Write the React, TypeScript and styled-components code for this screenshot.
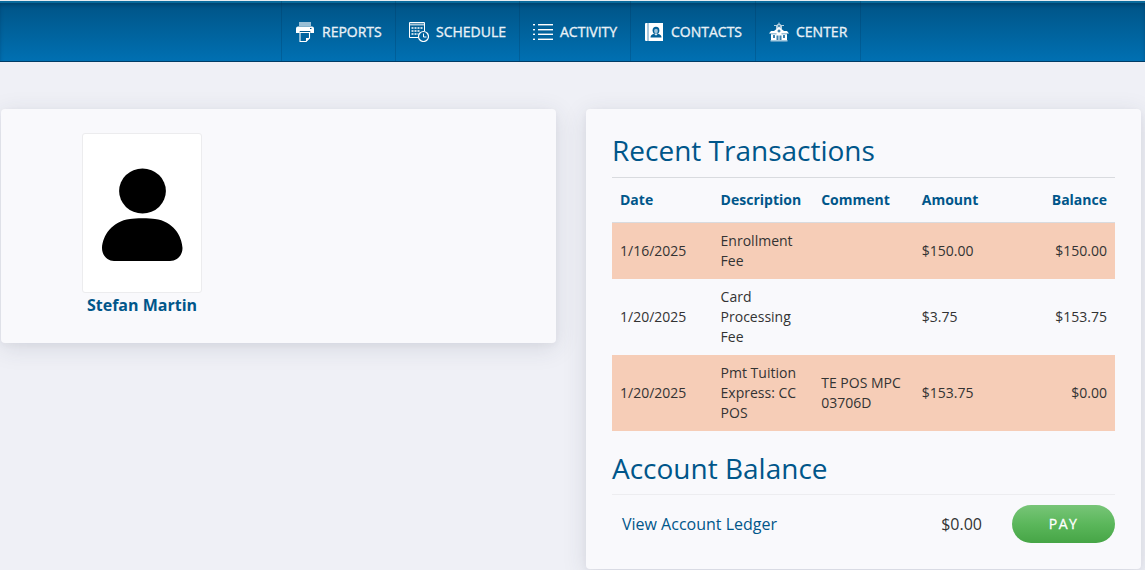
import React from "react";
import styled, { createGlobalStyle } from "styled-components";

const GlobalStyle = createGlobalStyle`
  *, *::before, *::after { box-sizing: border-box; }
  html, body { margin: 0; height: 570px; overflow: hidden; }
  body {
    background: #eff0f6;
    color: #333;
    font-family: "Open Sans", "Noto Sans", sans-serif;
    font-size: 16px;
  }
`;

const Header = styled.header`
  height: 62px;
  display: flex;
  padding-left: 281px;
  border-top: 1px solid #e8ebf0;
  border-bottom: 1px solid #003c66;
  background: linear-gradient(#005385, #0070b2);
  box-shadow: inset 0 2px 0 #0a6a9c, inset 0 5px 4px -1px rgba(0, 50, 85, 0.55);
`;

const NavItem = styled.a<{ $width: number; $last?: boolean }>`
  width: ${(p) => p.$width}px;
  height: 60px;
  display: flex;
  align-items: center;
  gap: 7px;
  padding: 2px 0 0 13px;
  border-left: 1px solid rgba(0, 45, 80, 0.22);
  ${(p) => p.$last && "border-right: 1px solid rgba(0, 45, 80, 0.22);"}
  color: #e9f1f7;
  font-size: 14px;
  font-weight: 500;
  -webkit-text-stroke: 0.35px #e9f1f7;
  line-height: 20px;
  white-space: nowrap;
  text-decoration: none;
`;

const NavIcon = styled.svg`
  width: 20px;
  height: 20px;
  flex: none;
  color: #fff;
`;

const Main = styled.main`
  display: flex;
  align-items: flex-start;
  gap: 30px;
  padding: 47px 4px 0 1px;
`;

const Card = styled.section<{ $height: number }>`
  width: 555px;
  height: ${(p) => p.$height}px;
  border-radius: 4px;
  background: #f9f9fc;
  box-shadow: 0 5px 25px rgba(50, 55, 80, 0.13), 0 2px 6px rgba(50, 55, 80, 0.04);
`;

const ProfileCard = styled(Card)`
  padding: 24px 0 0 81px;
`;

const Profile = styled.div`
  width: 120px;
  display: flex;
  flex-direction: column;
  align-items: center;
`;

const Avatar = styled.svg`
  width: 120px;
  height: 160px;
  border: 1px solid #ececee;
  border-radius: 3px;
  background: #fff;
`;

const Name = styled.a`
  color: #00568a;
  font-weight: 700;
  line-height: 24px;
  white-space: nowrap;
`;

const LedgerCard = styled(Card)`
  padding: 24px 26px 0;
`;

const Heading = styled.h2`
  margin: 0;
  color: #00568a;
  font-size: 28px;
  font-weight: 400;
  line-height: 34px;
`;

const Table = styled.table`
  width: 503px;
  margin-top: 10px;
  table-layout: fixed;
  border-collapse: separate;
  border-spacing: 0;
  font-size: 14px;
  line-height: 20px;
`;

const HeadCell = styled.th<{ $right?: boolean }>`
  height: 46px;
  padding: 0 8px;
  border-top: 1px solid #d9dbdf;
  border-bottom: 1px solid #d9dbdf;
  color: #00568a;
  font-weight: 700;
  text-align: ${(p) => (p.$right ? "right" : "left")};
`;

const Row = styled.tr<{ $shaded?: boolean }>`
  background: ${(p) => (p.$shaded ? "#f6cdb7" : "transparent")};
`;

const Cell = styled.td<{ $right?: boolean }>`
  padding: 8px;
  vertical-align: middle;
  text-align: ${(p) => (p.$right ? "right" : "left")};
`;

const BalanceHeading = styled(Heading)`
  margin-top: 20px;
  height: 44px;
  border-bottom: 1px solid #ededf0;
`;

const BalanceRow = styled.div`
  display: flex;
  align-items: center;
  height: 38px;
  margin-top: 10px;
  padding-left: 10px;
`;

const LedgerLink = styled.a`
  flex: 1;
  color: #00568a;
`;

const Total = styled.span`
  margin-right: 30px;
`;

const PayButton = styled.button`
  width: 103px;
  height: 38px;
  padding: 0;
  border: 0;
  border-radius: 19px;
  background: linear-gradient(#78c578, #5bb75b 50%, #46a546);
  color: #fff;
  font: 500 14px/20px "Open Sans", sans-serif;
  letter-spacing: 1.4px;
  -webkit-text-stroke: 0.3px #fff;
`;

const PrinterIcon = () => (
  <NavIcon viewBox="0 0 20 20" fill="currentColor">
    <path opacity=".6" d="M4 0h12v4H4z" />
    <path d="M3 4.500h14q2 0 2 2V11h-4V9H5v2H1V6.500q0-2 2-2z" />
    <path d="M4 9.500h12v1H4z" fill="#003f68" opacity=".5" />
    <path d="M5 10.500h9.500V16L11 19.500H5z" fill="#0064a0" stroke="currentColor" strokeWidth="1.100" />
    <path d="M11 16h3.500L11 19.500z" />
    <path d="M15 6h1.500v1H15z" fill="#00568a" />
  </NavIcon>
);

const ScheduleIcon = () => (
  <NavIcon viewBox="0 0 20 20" fill="none" stroke="currentColor">
    <path d="M9 15.500H.5V.5h15V9" />
    <path d="M1 2.500h14" strokeWidth="2" opacity=".65" />
    <path d="M2.500 6h11M2.500 9h9M2.500 12h7" strokeWidth="2" strokeDasharray="2 1" opacity=".75" />
    <circle cx="14.500" cy="14.500" r="5" strokeWidth="1.200" />
    <path d="M14.500 11.500v3.500h3" />
  </NavIcon>
);

const ListIcon = () => (
  <NavIcon viewBox="0 0 20 20" fill="none" stroke="currentColor">
    <path d="M0 2.500h2M5 2.500h15M0 7.500h2M5 7.500h15M0 12.500h2M5 12.500h15M0 17.500h2M5 17.500h15" />
    <path d="M0 3.500h2M5 3.500h15M0 8.500h2M5 8.500h15M0 11.500h2M5 11.500h15M0 16.500h2M5 16.500h15" opacity=".4" />
  </NavIcon>
);

const ContactsIcon = () => (
  <NavIcon viewBox="0 0 20 20">
    <path d="M2 1h17v18H2q-1 0-1-1V2q0-1 1-1z" fill="#fff" />
    <path d="M3 1h2v18H3z" fill="#a9c8dd" />
    <path d="M6.500 15.500c0-2.300 1.500-3.300 3.700-3.800h3.600c2.200.5 3.700 1.500 3.700 3.800z" fill="#005f97" />
    <ellipse cx="12" cy="8.500" rx="3.400" ry="3.700" fill="#005f97" />
    <ellipse cx="12" cy="9" rx="1.900" ry="2.300" fill="#9fc3da" />
    <path d="M10.700 11.500h2.600v1.300l-1.300.8-1.300-.8z" fill="#dce9f2" />
  </NavIcon>
);

const CenterIcon = () => (
  <NavIcon viewBox="0 0 20 20" fill="currentColor">
    <path opacity=".7" d="M9.500 0.500h1v1l2 1.500H15v1h-2v3H7V4H5V3h2.500l2-1.500z" />
    <path d="M10 5l5 4h3l2 2.500h-2V18H2v-6.500H0L2 9h3z" />
    <path opacity=".65" d="M1.500 18h17v1.500h-17z" />
    <path fill="#00598e" d="M9.300 3.300h1.400v1.400H9.300zM9.500 7.500h1v1h1v1h-1v1h-1v-1h-1v-1h1z" />
    <path fill="#3b82b0" d="M4 13h2v3H4zM14 13h2v3h-2zM7.500 13.500h2V18h-2zM10.500 13.500h2V18h-2zM2 11.500h5.500v.8H2zM12.500 11.500H18v.8h-5.500z" />
  </NavIcon>
);

const NAV = [
  { label: "REPORTS", width: 114, Icon: PrinterIcon },
  { label: "SCHEDULE", width: 124, Icon: ScheduleIcon },
  { label: "ACTIVITY", width: 111, Icon: ListIcon },
  { label: "CONTACTS", width: 125, Icon: ContactsIcon },
  { label: "CENTER", width: 106, Icon: CenterIcon },
];

const TRANSACTIONS = [
  { date: "1/16/2025", description: "Enrollment Fee", comment: "", amount: "$150.00", balance: "$150.00" },
  { date: "1/20/2025", description: "Card Processing Fee", comment: "", amount: "$3.75", balance: "$153.75" },
  { date: "1/20/2025", description: "Pmt Tuition Express: CC POS", comment: "TE POS MPC 03706D", amount: "$153.75", balance: "$0.00" },
];

export default function App() {
  return (
    <>
      <GlobalStyle />
      <Header>
        {NAV.map(({ label, width, Icon }, i) => (
          <NavItem key={label} $width={width} $last={i === NAV.length - 1}>
            <Icon />
            {label}
          </NavItem>
        ))}
      </Header>
      <Main>
        <ProfileCard $height={234}>
          <Profile>
            <Avatar viewBox="1 1 118 158">
              <ellipse cx="60.500" cy="58" rx="23.400" ry="22.500" />
              <path d="M48 86C53 85 68 85 73 86C91 88 100 103 100.500 115C100.500 122 95.500 128 88 128H32C25 128 20 122 20 115C20.500 103 30 88 48 86Z" />
            </Avatar>
            <Name>Stefan Martin</Name>
          </Profile>
        </ProfileCard>
        <LedgerCard $height={460}>
          <Heading>Recent Transactions</Heading>
          <Table>
            <thead>
              <tr>
                <HeadCell>Date</HeadCell>
                <HeadCell>Description</HeadCell>
                <HeadCell>Comment</HeadCell>
                <HeadCell>Amount</HeadCell>
                <HeadCell $right>Balance</HeadCell>
              </tr>
            </thead>
            <tbody>
              {TRANSACTIONS.map((t, i) => (
                <Row key={i} $shaded={i % 2 === 0}>
                  <Cell>{t.date}</Cell>
                  <Cell>{t.description}</Cell>
                  <Cell>{t.comment}</Cell>
                  <Cell>{t.amount}</Cell>
                  <Cell $right>{t.balance}</Cell>
                </Row>
              ))}
            </tbody>
          </Table>
          <BalanceHeading>Account Balance</BalanceHeading>
          <BalanceRow>
            <LedgerLink>View Account Ledger</LedgerLink>
            <Total>$0.00</Total>
            <PayButton>PAY</PayButton>
          </BalanceRow>
        </LedgerCard>
      </Main>
    </>
  );
}
